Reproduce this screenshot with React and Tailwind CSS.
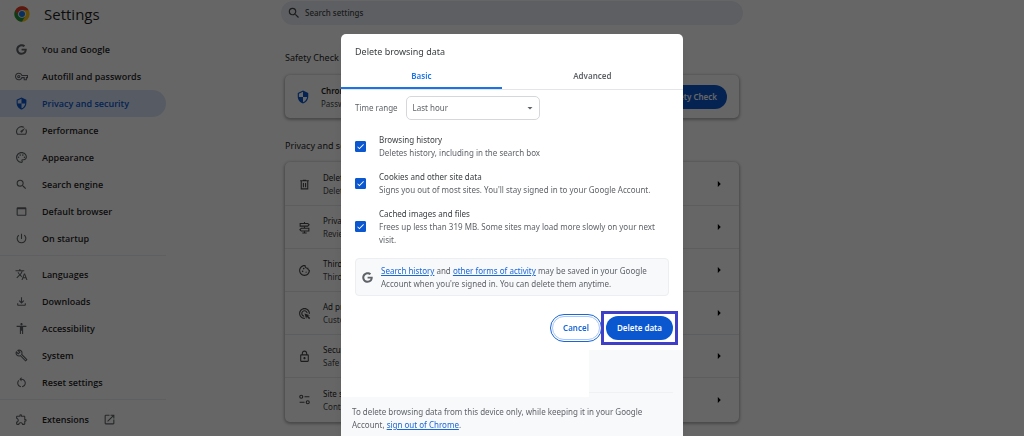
import React, { useState } from 'react';
import { FaGoogle } from 'react-icons/fa';
import {
    MdAccessibility,
    MdAdsClick,
    MdArrowDropDown,
    MdArrowRight,
    MdCheck,
    MdOpenInNew,
    MdOutlineBuild,
    MdOutlineCookie,
    MdOutlineExtension,
    MdOutlineFileDownload,
    MdOutlineLock,
    MdOutlinePalette,
    MdOutlineSpeed,
    MdOutlineVpnKey,
    MdPowerSettingsNew,
    MdRestartAlt,
    MdSearch,
    MdSecurity,
    MdTranslate,
    MdWebAsset,
} from 'react-icons/md';

function ChromeLogo() {
    return (
        <svg viewBox="0 0 48 48" className="size-4 shrink-0" aria-hidden="true">
            <circle cx="24" cy="24" r="23" fill="#fbc116" />
            <path d="M4.1 12.5A23 23 0 0 0 24 47l10-17.3L24 24 14 29.7Z" fill="#229342" />
            <path d="M4.1 12.5 14 29.7 24 24V12.5Z" fill="#229342" />
            <path d="M4.1 12.5A23 23 0 0 1 43.9 12.5H24a11.5 11.5 0 0 0-10 17.2Z" fill="#e33b2e" />
            <circle cx="24" cy="24" r="11.5" fill="#fff" />
            <circle cx="24" cy="24" r="9" fill="#1a73e8" />
        </svg>
    );
}

function TrashIcon({ className }) {
    return (
        <svg viewBox="0 0 24 24" fill="none" stroke="currentColor" strokeWidth="2" className={className}>
            <path d="M4 5h16M9 4h6M6 5v15h12V5M10 9v8M14 9v8" />
        </svg>
    );
}

function SignpostIcon({ className }) {
    return (
        <svg viewBox="0 0 24 24" fill="none" stroke="currentColor" strokeWidth="2" className={className}>
            <path d="M12 2v2M12 10v3M12 19v3M8 22h8" />
            <path d="M4 4.5h14l2.5 2.5-2.5 2.5H4Z" />
            <path d="M20 13.5H6L3.5 16 6 18.5h14Z" />
        </svg>
    );
}

function TuneIcon({ className }) {
    return (
        <svg viewBox="0 0 24 24" fill="none" stroke="currentColor" strokeWidth="2" className={className}>
            <circle cx="6" cy="7" r="2.8" />
            <path d="M12 7h9M3 17h9" />
            <circle cx="18" cy="17" r="2.8" />
        </svg>
    );
}

const mainLinks = [
    { label: 'You and Google', icon: FaGoogle, padded: true },
    { label: 'Autofill and passwords', icon: MdOutlineVpnKey },
    { label: 'Privacy and security', icon: MdSecurity, active: true },
    { label: 'Performance', icon: MdOutlineSpeed },
    { label: 'Appearance', icon: MdOutlinePalette },
    { label: 'Search engine', icon: MdSearch },
    { label: 'Default browser', icon: MdWebAsset },
    { label: 'On startup', icon: MdPowerSettingsNew },
];

const advancedLinks = [
    { label: 'Languages', icon: MdTranslate },
    { label: 'Downloads', icon: MdOutlineFileDownload },
    { label: 'Accessibility', icon: MdAccessibility },
    { label: 'System', icon: MdOutlineBuild },
    { label: 'Reset settings', icon: MdRestartAlt },
];

const privacyRows = [
    { title: 'Delete data', text: 'Delete history', icon: TrashIcon },
    { title: 'Privacy Guide', text: 'Review', icon: SignpostIcon },
    { title: 'Third-party', text: 'Third-party', icon: MdOutlineCookie },
    { title: 'Ad privacy', text: 'Customize', icon: MdAdsClick },
    { title: 'Security', text: 'Safe Browsing', icon: MdOutlineLock },
    { title: 'Site settings', text: 'Controls', icon: TuneIcon },
];

const dataTypes = [
    { id: 'history', title: 'Browsing history', text: 'Deletes history, including in the search box' },
    {
        id: 'cookies',
        title: 'Cookies and other site data',
        text: "Signs you out of most sites. You'll stay signed in to your Google Account.",
    },
    {
        id: 'cache',
        title: 'Cached images and files',
        text: 'Frees up less than 319 MB. Some sites may load more slowly on your next visit.',
    },
];

function NavLink({ label, icon: Icon, active, padded, external }) {
    return (
        <a
            href="#"
            className={`flex h-[27px] items-center gap-3.5 rounded-r-full pl-[15px] font-semibold ${
                active ? 'bg-[#d9e3f8] text-[#0b57d0]' : 'text-[#1f1f1f]'
            }`}
        >
            <Icon className={`size-[13px] shrink-0 ${active ? '' : 'text-[#5f6368]'} ${padded ? 'p-px' : ''}`} />
            {label}
            {external && <MdOpenInNew className="size-[13px] text-[#5f6368]" />}
        </a>
    );
}

function Sidebar() {
    return (
        <aside className="font-['Open_Sans','Noto_Sans',sans-serif] text-[9px]">
            <div className="flex h-7 items-center gap-3.5 pl-3.5 text-[#1f1f1f]">
                <ChromeLogo />
                <h1 className="text-[15px] font-medium">Settings</h1>
            </div>
            <nav className="mt-2 w-[166px]">
                {mainLinks.map((link) => (
                    <NavLink key={link.label} {...link} />
                ))}
                <hr className="mt-[3px] mb-[5px] border-[#eceef0]" />
                {advancedLinks.map((link) => (
                    <NavLink key={link.label} {...link} />
                ))}
                <hr className="mt-[3px] mb-1.5 border-[#eceef0]" />
                <NavLink label="Extensions" icon={MdOutlineExtension} external />
            </nav>
        </aside>
    );
}

function SettingsPage() {
    return (
        <div className="grid h-full grid-cols-[1fr_minmax(0,462px)_1fr]">
            <Sidebar />
            <main className="pt-px">
                <label className="flex h-6 items-center gap-1 rounded-full bg-[#e9eef6] pl-1.5 text-[#474747]">
                    <MdSearch className="size-3.5 shrink-0" />
                    <input
                        type="search"
                        aria-label="Search settings"
                        placeholder="Search settings"
                        className="w-full bg-transparent font-medium outline-none placeholder:text-[#474747]"
                    />
                </label>
                <div className="px-1 pt-[25px]">
                    <h2 className="text-[9px] leading-4 text-[#1f1f1f]">Safety Check</h2>
                    <section className="mt-[9px] flex h-[43px] items-center gap-[11px] rounded-[5px] pr-3 pl-[11px] shadow-[0_1px_3px_1px_rgba(60,64,67,0.4)]">
                        <MdSecurity className="size-3.5 shrink-0 text-[#0b57d0]" />
                        <div className="flex-1 leading-[13px]">
                            <h3 className="font-semibold text-[#1f1f1f]">Chrome</h3>
                            <p className="text-[#474747]">Passwords</p>
                        </div>
                        <button type="button" className="h-6 rounded-full bg-[#0b57d0] px-2.5 font-semibold text-white">
                            Go to Safety Check
                        </button>
                    </section>
                    <h2 className="mt-5 text-[9px] leading-4 text-[#1f1f1f]">Privacy and security</h2>
                    <ul className="mt-2 divide-y divide-[#e6e8ea] rounded-[5px] py-px shadow-[0_1px_3px_1px_rgba(60,64,67,0.4)]">
                        {privacyRows.map(({ title, text, icon: Icon }) => (
                            <li key={title} className="h-[43px]">
                                <a href="#" className="flex h-full items-center gap-3 px-[13px] leading-[13px]">
                                    <Icon className="size-[13px] shrink-0 text-[#474747]" />
                                    <span className="flex-1">
                                        <span className="block text-[#1f1f1f]">{title}</span>
                                        <span className="block text-[#474747]">{text}</span>
                                    </span>
                                    <MdArrowRight className="size-3.5 text-black" />
                                </a>
                            </li>
                        ))}
                    </ul>
                </div>
            </main>
        </div>
    );
}

function DeleteDialog() {
    const [checked, setChecked] = useState({ history: true, cookies: true, cache: true });

    const toggle = (id) => setChecked((prev) => ({ ...prev, [id]: !prev[id] }));

    return (
        <div
            role="dialog"
            aria-modal="true"
            aria-labelledby="dialog-title"
            className="flex w-full max-w-[342px] flex-col overflow-hidden rounded-t-[5px] bg-white text-[#5f6368] shadow-lg"
        >
            <h2 id="dialog-title" className="px-3.5 pt-2.5 text-[9px] leading-4 text-[#3c4043]">
                Delete browsing data
            </h2>
            <div role="tablist" className="flex h-[30px] border-b border-[#e3e5e8] font-semibold">
                <button type="button" role="tab" aria-selected="true" className="w-[47%] border-b-2 border-[#1a73e8] pt-1 text-[#1a73e8]">
                    Basic
                </button>
                <button type="button" role="tab" aria-selected="false" className="flex-1 border-b-2 border-transparent pt-1">
                    Advanced
                </button>
            </div>

            <div className="px-3.5">
                <div className="flex items-center gap-2 pt-1.5">
                    <label htmlFor="time-range">Time range</label>
                    <div className="relative w-[134px]">
                        <select id="time-range" className="h-6 w-full appearance-none rounded-[5px] border border-[#d5d7db] bg-white px-1.5">
                            <option>Last hour</option>
                            <option>Last 24 hours</option>
                            <option>Last 7 days</option>
                            <option>All time</option>
                        </select>
                        <MdArrowDropDown className="pointer-events-none absolute top-1.5 right-1 size-3" />
                    </div>
                </div>

                <div className="mt-[13px] flex flex-col gap-[11px]">
                    {dataTypes.map(({ id, title, text }) => (
                        <label key={id} className="flex items-center gap-[13px] leading-[13px]">
                            <span className="grid shrink-0 place-items-center">
                                <input
                                    type="checkbox"
                                    checked={checked[id]}
                                    onChange={() => toggle(id)}
                                    className="peer col-start-1 row-start-1 size-[11px] appearance-none rounded-[1px] border border-[#0b57d0] checked:bg-[#0b57d0]"
                                />
                                <MdCheck className="pointer-events-none invisible col-start-1 row-start-1 size-[9px] text-white peer-checked:visible" />
                            </span>
                            <span>
                                <span className="block text-[#3c4043]">{title}</span>
                                <span className="block">{text}</span>
                            </span>
                        </label>
                    ))}
                </div>

                <div className="mt-3 flex min-h-[38px] items-center gap-2 rounded-sm border border-[#eceef1] bg-[#f8f9fb] px-1.5 leading-[13px]">
                    <FaGoogle className="size-[11px] shrink-0" />
                    <p>
                        <a href="#" className="text-[#1a66d6] underline">Search history</a> and{' '}
                        <a href="#" className="text-[#1a66d6] underline">other forms of activity</a> may be saved in your Google
                        Account when you're signed in. You can delete them anytime.
                    </p>
                </div>
            </div>

            <div className="mt-5 flex items-center justify-end gap-1.5 pr-2.5 pb-2.5 font-semibold">
                <button
                    type="button"
                    className="h-6 w-12 rounded-full border border-[#a8c7fa] text-[#1a66d6] outline-1 outline-offset-1 outline-[#1a66d6]"
                >
                    Cancel
                </button>
                <div className="relative">
                    <button type="button" className="h-6 w-[67px] rounded-full bg-[#0b57d0] text-white">
                        Delete data
                    </button>
                    <span className="pointer-events-none absolute -inset-[5px] border-[3px] border-[#3f3fc8]" />
                </div>
            </div>

            <footer className="flex-1 bg-[#f8f9fb]">
                <div className="flex h-[47px]">
                    <div className="w-[248px] bg-white" />
                    <hr className="mt-[42px] mr-2.5 flex-1 border-[#eff1f3]" />
                </div>
                <p className="px-[11px] pt-2 leading-[13px]">
                    To delete browsing data from this device only, while keeping it in your Google Account,{' '}
                    <a href="#" className="text-[#1a66d6] underline">sign out of Chrome</a>.
                </p>
            </footer>
        </div>
    );
}

export default function App() {
    return (
        <div className="h-screen overflow-hidden bg-white font-['Noto_Sans','Open_Sans',sans-serif] text-[8px]">
            <SettingsPage />
            <div className="fixed inset-0 flex justify-center overflow-hidden bg-black/60 pt-[34px]">
                <DeleteDialog />
            </div>
        </div>
    );
}
